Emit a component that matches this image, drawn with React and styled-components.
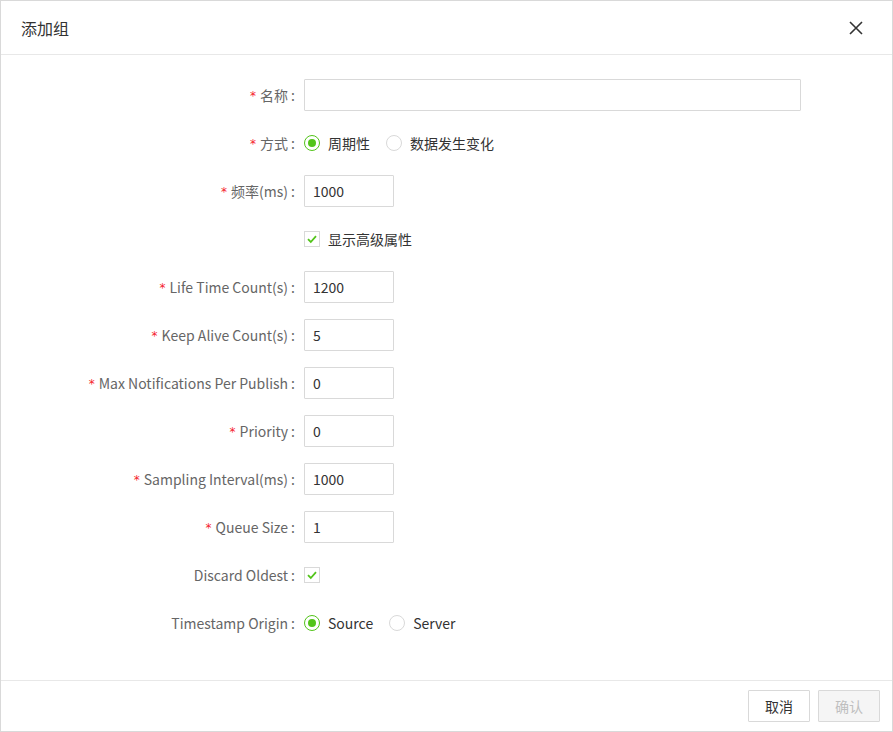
import styled, { createGlobalStyle } from "styled-components";

const GlobalStyle = createGlobalStyle`
  html, body {
    margin: 0;
    padding: 0;
    background: #fff;
  }
  body {
    font-family: "Noto Sans CJK SC", "Noto Sans", sans-serif;
    font-size: 14px;
    color: #333;
  }
`;

const Dialog = styled.div`
  box-sizing: border-box;
  width: 893px;
  height: 732px;
  border: 1px solid #d9d9d9;
  display: flex;
  flex-direction: column;
  background: #fff;
`;

const Header = styled.div`
  height: 53px;
  border-bottom: 1px solid #e8e8e8;
  display: flex;
  align-items: center;
  justify-content: space-between;
  padding: 0 20px;
  box-sizing: content-box;
`;

const Title = styled.div`
  font-size: 16px;
  color: #333;
`;

const CloseButton = styled.button`
  background: transparent;
  border: none;
  padding: 0;
  width: 18px;
  height: 18px;
  display: flex;
  align-items: center;
  justify-content: center;
  cursor: pointer;
  margin-right: 7px;
`;

const Body = styled.div`
  flex: 1;
  padding-top: 16px;
`;

const Row = styled.div`
  display: grid;
  grid-template-columns: 303px 1fr;
  height: 48px;
  align-items: center;
`;

const Label = styled.label`
  text-align: right;
  padding-right: 9px;
  color: #666;
  white-space: nowrap;
`;

const Colon = styled.span`
  margin-left: 3px;
`;

const Star = styled.span`
  color: #f5222d;
  margin-right: 4px;
  font-family: "DejaVu Sans", sans-serif;
  font-size: 12px;
  position: relative;
  top: -1px;
`;

const Input = styled.input`
  box-sizing: border-box;
  width: ${(p) => (p.wide ? "497px" : "90px")};
  height: 32px;
  border: 1px solid #d9d9d9;
  border-radius: 1px;
  padding: 0 8px;
  font-family: inherit;
  font-size: 14px;
  color: #333;
  outline: none;
`;

const Options = styled.div`
  display: flex;
  align-items: center;
`;

const Option = styled.span`
  display: inline-flex;
  align-items: center;
  margin-right: 16px;
  color: #333;
`;

const RadioDot = styled.span`
  box-sizing: border-box;
  width: 16px;
  height: 16px;
  border-radius: 50%;
  border: 1px solid ${(p) => (p.checked ? "#52c41a" : "#d9d9d9")};
  margin-right: 8px;
  display: inline-flex;
  align-items: center;
  justify-content: center;

  &::after {
    content: "";
    width: 8px;
    height: 8px;
    border-radius: 50%;
    background: ${(p) => (p.checked ? "#52c41a" : "transparent")};
  }
`;

const CheckBox = styled.span`
  box-sizing: border-box;
  width: 16px;
  height: 16px;
  border: 1px solid #d9d9d9;
  margin-right: 8px;
  display: inline-flex;
  align-items: center;
  justify-content: center;
`;

const Footer = styled.div`
  height: 50px;
  border-top: 1px solid #e8e8e8;
  display: flex;
  align-items: center;
  justify-content: flex-end;
  padding: 0 12px;
  gap: 8px;
`;

const Button = styled.button`
  box-sizing: border-box;
  width: 62px;
  height: 32px;
  font-family: inherit;
  font-size: 14px;
  border: 1px solid #d9d9d9;
  border-radius: 1px;
  background: ${(p) => (p.disabled ? "#f5f5f5" : "#fff")};
  color: ${(p) => (p.disabled ? "#bfbfbf" : "#333")};
  cursor: ${(p) => (p.disabled ? "not-allowed" : "pointer")};
`;

function Check() {
  return (
    <svg width="12" height="12" viewBox="0 0 12 12">
      <path d="M2 6.2 L4.8 9 L10 3.2" fill="none" stroke="#52c41a" strokeWidth="1.8" />
    </svg>
  );
}

function Radio({ checked, children }) {
  return (
    <Option>
      <RadioDot checked={checked} />
      {children}
    </Option>
  );
}

function Field({ label, required, children }) {
  return (
    <Row>
      <Label>
        {required && <Star>*</Star>}
        {label}
        <Colon>:</Colon>
      </Label>
      <Options>{children}</Options>
    </Row>
  );
}

export default function App() {
  return (
    <>
      <GlobalStyle />
      <Dialog>
        <Header>
          <Title>添加组</Title>
          <CloseButton>
            <svg width="14" height="14" viewBox="0 0 14 14">
              <path d="M1 1 L13 13 M13 1 L1 13" stroke="#333" strokeWidth="1.6" />
            </svg>
          </CloseButton>
        </Header>
        <Body>
          <Field label="名称" required>
            <Input wide defaultValue="" />
          </Field>
          <Field label="方式" required>
            <Radio checked>周期性</Radio>
            <Radio>数据发生变化</Radio>
          </Field>
          <Field label="频率(ms)" required>
            <Input defaultValue="1000" />
          </Field>
          <Row>
            <span />
            <Options>
              <Option>
                <CheckBox>
                  <Check />
                </CheckBox>
                显示高级属性
              </Option>
            </Options>
          </Row>
          <Field label="Life Time Count(s)" required>
            <Input defaultValue="1200" />
          </Field>
          <Field label="Keep Alive Count(s)" required>
            <Input defaultValue="5" />
          </Field>
          <Field label="Max Notifications Per Publish" required>
            <Input defaultValue="0" />
          </Field>
          <Field label="Priority" required>
            <Input defaultValue="0" />
          </Field>
          <Field label="Sampling Interval(ms)" required>
            <Input defaultValue="1000" />
          </Field>
          <Field label="Queue Size" required>
            <Input defaultValue="1" />
          </Field>
          <Field label="Discard Oldest">
            <CheckBox>
              <Check />
            </CheckBox>
          </Field>
          <Field label="Timestamp Origin">
            <Radio checked>Source</Radio>
            <Radio>Server</Radio>
          </Field>
        </Body>
        <Footer>
          <Button>取消</Button>
          <Button disabled>确认</Button>
        </Footer>
      </Dialog>
    </>
  );
}
